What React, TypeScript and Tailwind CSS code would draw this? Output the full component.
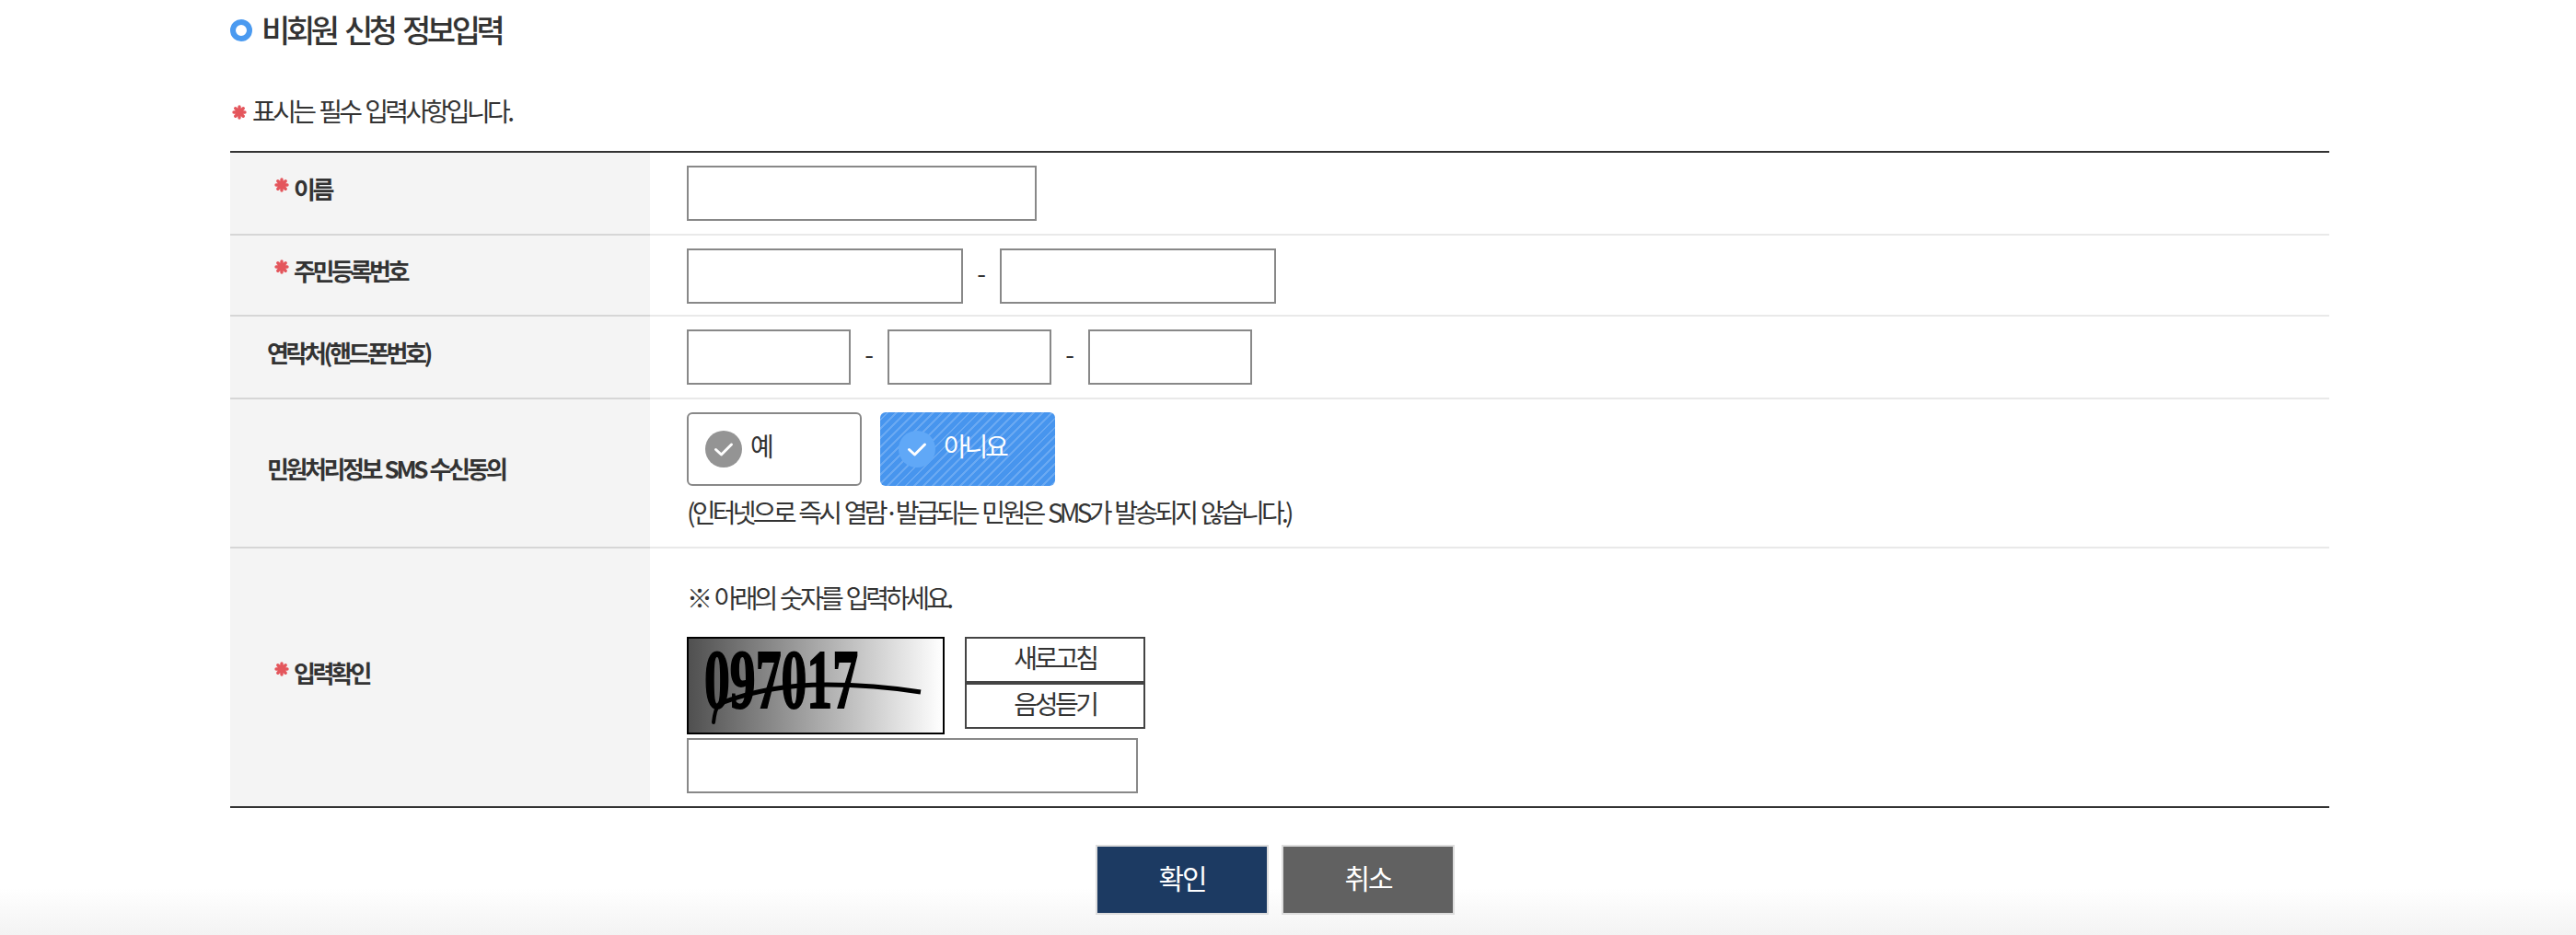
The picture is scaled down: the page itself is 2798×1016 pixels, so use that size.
const Star = ({ className = '' }: { className?: string }) => (
    <svg viewBox="0 0 16 16" className={`w-4 h-4 shrink-0 ${className}`} stroke="#e4565c" strokeWidth="3.4" strokeLinecap="round">
        <path d="M8 2v12M2 8h12M3.8 3.8l8.4 8.4M12.2 3.8l-8.4 8.4" />
    </svg>
)

const TextBox = ({ width }: { width: string }) => (
    <input type="text" className={`${width} h-[60px] border-2 border-[#888888] bg-white outline-none`} />
)

const Dash = () => <span className="w-10 -mt-[8px] text-center text-[28px] leading-none text-[#333333]">-</span>

const Check = ({ bg }: { bg: string }) => (
    <span className={`flex items-center justify-center w-10 h-10 rounded-full ${bg}`}>
        <svg viewBox="0 0 24 24" className="w-6 h-6" fill="none" stroke="#ffffff" strokeWidth="3" strokeLinecap="round" strokeLinejoin="round">
            <path d="M3.5 12.5l6 5.5L20.5 7" />
        </svg>
    </span>
)

const Row = ({ label, required, last, pb, children }: { label: string; required?: boolean; last?: boolean; pb: string; children: React.ReactNode }) => (
    <div className="flex">
        <div className={`w-[456px] shrink-0 flex items-center bg-[#f4f4f4] ${last ? '' : 'border-b-2 border-[#d6d6d6]'} ${required ? 'pl-[48px]' : 'pl-10'}`}>
            <div className="flex items-start -mt-[10px] text-[26px] leading-8 font-semibold tracking-[-3.4px] [word-spacing:2px] text-[#333333]">
                {required && <Star className="mr-[5px] mt-[4px]" />}
                <span>{label}</span>
            </div>
        </div>
        <div className={`flex-1 pl-10 pt-[14px] ${pb} ${last ? '' : 'border-b-2 border-[#e9e9e9]'}`}>{children}</div>
    </div>
)

export default function App() {
    return (
        <div
            className="min-h-[1016px] bg-[linear-gradient(to_bottom,#ffffff_965px,#f3f3f3_1016px)] pl-[250px] text-[#333333]"
            style={{ fontFamily: '"Noto Sans CJK KR", "Liberation Sans", sans-serif' }}
        >
            <div className="w-[2280px]">
                <h2 className="flex items-center h-[66px] text-[34px] leading-[66px] font-medium tracking-[-4.4px] [word-spacing:6px] text-[#333333]">
                    <span className="w-6 h-6 mr-[10px] rounded-full border-[6px] border-[#4a9af0] bg-white" />
                    <span className="-mt-[2px]">비회원 신청 정보입력</span>
                </h2>
                <p className="flex items-center h-[48px] mt-[32px] text-[28px] tracking-[-3.6px] [word-spacing:3px]">
                    <Star className="ml-[2px] mr-[6px]" />
                    <span className="-mt-[4px]">표시는 필수 입력사항입니다.</span>
                </p>
                <div className="mt-[18px] border-t-2 border-b-2 border-[#333333]">
                    <Row label="이름" required pb="pb-[14px]">
                        <TextBox width="w-[380px]" />
                    </Row>
                    <Row label="주민등록번호" required pb="pb-[12px]">
                        <div className="flex items-center">
                            <TextBox width="w-[300px]" />
                            <Dash />
                            <TextBox width="w-[300px]" />
                        </div>
                    </Row>
                    <Row label="연락처(핸드폰번호)" pb="pb-[14px]">
                        <div className="flex items-center">
                            <TextBox width="w-[178px]" />
                            <Dash />
                            <TextBox width="w-[178px]" />
                            <Dash />
                            <TextBox width="w-[178px]" />
                        </div>
                    </Row>
                    <Row label="민원처리정보 SMS 수신동의" pb="pb-[16px]">
                        <div className="flex gap-5">
                            <div className="flex items-center gap-[10px] w-[190px] h-20 pl-[18px] border-2 border-[#888888] rounded-md bg-white">
                                <Check bg="bg-[#949494]" />
                                <span className="-mt-2 text-[28px] tracking-[-2px] -ml-[1px]">예</span>
                            </div>
                            <div className="flex items-center gap-[10px] w-[190px] h-20 pl-5 rounded-md bg-[#4795ee] bg-[repeating-linear-gradient(135deg,#4795ee_0px,#4795ee_5px,#6aa9f2_5px,#6aa9f2_7px)]">
                                <Check bg="bg-[#60a8f7]" />
                                <span className="-mt-2 text-[28px] tracking-[-3.2px] -ml-[1px] text-white">아니요</span>
                            </div>
                        </div>
                        <p className="mt-[9px] mb-[3px] h-[38px] leading-[38px] text-[28px] tracking-[-3.75px] [word-spacing:3px]">
                            (인터넷으로 즉시 열람·발급되는 민원은 SMS가 발송되지 않습니다.)
                        </p>
                    </Row>
                    <Row label="입력확인" required last pb="pb-[14px]">
                        <p className="h-[40px] mt-[19px] leading-[40px] text-[28px] tracking-[-3.8px] [word-spacing:3px]">※ 아래의 숫자를 입력하세요.</p>
                        <div className="flex gap-[22px] mt-[23px]">
                            <div className="w-[280px] h-[106px] border-2 border-black bg-[linear-gradient(to_right,#505050,#ffffff)]">
                                <svg viewBox="0 0 276 102" className="w-full h-full overflow-visible">
                                    <text x="17" y="75" textLength="167" lengthAdjust="spacingAndGlyphs" fontFamily="Liberation Serif" fontWeight="700" fontSize="90" stroke="#000000" strokeWidth="2" fill="#000000">
                                        097017
                                    </text>
                                    <path d="M27 91C28 82 29 76 33 71" fill="none" stroke="#000000" strokeWidth="4" strokeLinecap="round" />
                                    <path d="M33 71C70 56 110 50 150 50C190 50 220 53 252 58" fill="none" stroke="#000000" strokeWidth="5" />
                                </svg>
                            </div>
                            <div className="flex flex-col">
                                <button className="w-[196px] h-[50px] pb-[6px] border-2 border-[#444444] bg-white text-[28px] leading-[38px] tracking-[-3.4px]">새로고침</button>
                                <button className="w-[196px] h-[50px] pb-[6px] border-2 border-[#444444] bg-white text-[28px] leading-[38px] tracking-[-3.4px]">음성듣기</button>
                            </div>
                        </div>
                        <div className="mt-[4px] flex">
                            <TextBox width="w-[490px]" />
                        </div>
                    </Row>
                </div>
                <div className="flex justify-center gap-[14px] mt-10 pr-[10px]">
                    <button className="w-[188px] h-[76px] pb-[6px] border-2 border-[#dddddd] bg-[#1c3a62] text-[30px] tracking-[-2px] text-white">확인</button>
                    <button className="w-[188px] h-[76px] pb-[6px] border-2 border-[#dddddd] bg-[#616161] text-[30px] tracking-[-2px] text-white">취소</button>
                </div>
            </div>
        </div>
    )
}
